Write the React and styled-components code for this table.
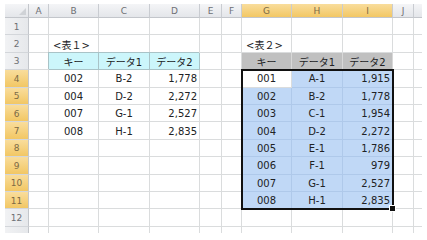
import React from 'react';
import styled, { createGlobalStyle, css } from 'styled-components';

const GlobalStyle = createGlobalStyle`
    html, body {
        margin: 0;
        padding: 0;
        background: #ffffff;
    }
`;

const COLUMNS = [
    { key: 'A', width: 20 },
    { key: 'B', width: 50 },
    { key: 'C', width: 51 },
    { key: 'D', width: 50 },
    { key: 'E', width: 22 },
    { key: 'F', width: 20 },
    { key: 'G', width: 50 },
    { key: 'H', width: 51 },
    { key: 'I', width: 50 },
    { key: 'J', width: 21 },
    { key: 'K', width: 8, partial: true }
];

const ROW_COUNT = 12;
const SELECTED_COLS = ['G', 'H', 'I'];
const SELECTED_ROWS = [4, 5, 6, 7, 8, 9, 10, 11];

const table1 = [
    ['002', 'B-2', '1,778'],
    ['004', 'D-2', '2,272'],
    ['007', 'G-1', '2,527'],
    ['008', 'H-1', '2,835']
];

const table2 = [
    ['001', 'A-1', '1,915'],
    ['002', 'B-2', '1,778'],
    ['003', 'C-1', '1,954'],
    ['004', 'D-2', '2,272'],
    ['005', 'E-1', '1,786'],
    ['006', 'F-1', '979'],
    ['007', 'G-1', '2,527'],
    ['008', 'H-1', '2,835']
];

// cell address -> { text, align, kind }
const buildCells = () => {
    const cells = {
        B2: { text: '<表１>', align: 'left' },
        G2: { text: '<表２>', align: 'left' }
    };
    ['キー', 'データ1', 'データ2'].forEach((label, i) => {
        cells['BCD'[i] + '3'] = { text: label, align: 'center', kind: 'cyan' };
        cells['GHI'[i] + '3'] = { text: label, align: 'center', kind: 'grey' };
    });
    table1.forEach((row, r) => {
        row.forEach((value, i) => {
            cells['BCD'[i] + (r + 4)] = { text: value, align: i === 2 ? 'right' : 'center' };
        });
    });
    table2.forEach((row, r) => {
        row.forEach((value, i) => {
            const addr = 'GHI'[i] + (r + 4);
            cells[addr] = {
                text: value,
                align: i === 2 ? 'right' : 'center',
                kind: addr === 'G4' ? 'active' : 'selected'
            };
        });
    });
    return cells;
};

const CELLS = buildCells();

const Sheet = styled.div`
    display: grid;
    grid-template-columns: 24px ${COLUMNS.map(c => c.width + 'px').join(' ')};
    grid-template-rows: 14px repeat(${ROW_COUNT}, 17.4px) 6px;
    margin: 4px 0 0 5px;
    width: max-content;
    font-family: "DejaVu Sans", "Noto Sans CJK JP", sans-serif;
`;

const Corner = styled.div`
    grid-row: 1;
    grid-column: 1;
    position: relative;
    box-sizing: border-box;
    background: linear-gradient(#f4f5f7, #e4e6ea);
    border-right: 1px solid #c3c6cb;
    border-bottom: 1px solid #c3c6cb;

    &::after {
        content: '';
        position: absolute;
        right: 2px;
        bottom: 2px;
        border-left: 7px solid transparent;
        border-bottom: 7px solid #cfd2d6;
    }
`;

const selectedHeader = css`
    background: linear-gradient(#f9dd9c, #f2c764);
    color: #7c6a45;
`;

const ColHeader = styled.div`
    grid-row: 1;
    grid-column: ${p => p.$col};
    box-sizing: border-box;
    display: flex;
    align-items: center;
    justify-content: center;
    background: linear-gradient(#f4f5f7, #e4e6ea);
    border-right: ${p => (p.$partial ? 'none' : '1px solid #c9ccd1')};
    border-bottom: 1px solid #c3c6cb;
    font-size: 9px;
    color: #6e7074;
    ${p => p.$selected && selectedHeader}
`;

const RowHeader = styled.div`
    grid-row: ${p => p.$row};
    grid-column: 1;
    box-sizing: border-box;
    display: flex;
    align-items: center;
    justify-content: center;
    padding-top: 1px;
    background: linear-gradient(90deg, #f1f2f4, #e6e8eb);
    border-right: 1px solid #c3c6cb;
    border-bottom: ${p => (p.$partial ? 'none' : '1px solid #d3d6da')};
    font-size: 9px;
    color: #6e7074;
    ${p => p.$selected && selectedHeader}
`;

const kindStyles = {
    cyan: css`
        background: #ccf6fb;
        border-color: #a9c3c7;
        box-shadow: -1px -1px 0 #a9c3c7;
    `,
    grey: css`
        background: #c0c0c0;
        border-right-color: #d8d8d8;
        border-bottom-color: #b0b0b0;
    `,
    selected: css`
        background: #c0d8f6;
        border-color: #afc9ea;
    `,
    active: css`
        background: #ffffff;
        border-color: #dadcdd;
    `
};

const Cell = styled.div`
    grid-row: ${p => p.$row};
    grid-column: ${p => p.$col};
    box-sizing: border-box;
    display: flex;
    align-items: center;
    justify-content: ${p =>
        p.$align === 'right' ? 'flex-end' : p.$align === 'center' ? 'center' : 'flex-start'};
    padding: 1px 2px 0 ${p => (p.$align === 'left' ? '4px' : '2px')};
    background: #ffffff;
    border-right: 1px solid #dadcdd;
    border-bottom: 1px solid #dadcdd;
    ${p => p.$partialCol && 'border-right: none;'}
    ${p => p.$partialRow && 'border-bottom: none;'}
    font-size: 10px;
    color: #202224;
    white-space: nowrap;
    ${p => p.$kind && kindStyles[p.$kind]}
`;

const Selection = styled.div`
    grid-row: 5 / 13;
    grid-column: 8 / 11;
    position: relative;
    margin: -1px -1px -1px -1px;
    border: 2px solid #111111;
    pointer-events: none;
`;

const FillHandle = styled.span`
    position: absolute;
    right: -4px;
    bottom: -4px;
    width: 5px;
    height: 5px;
    background: #111111;
    border: 1px solid #ffffff;
`;

const App = () => {
    const rows = Array.from({ length: ROW_COUNT + 1 }, (_, i) => i + 1);

    return (
        <>
            <GlobalStyle />
            <Sheet>
                <Corner />
                {COLUMNS.map((c, ci) => (
                    <ColHeader
                        key={c.key}
                        $col={ci + 2}
                        $partial={c.partial}
                        $selected={SELECTED_COLS.includes(c.key)}
                    >
                        {c.partial ? '' : c.key}
                    </ColHeader>
                ))}
                {rows.map(r => {
                    const partialRow = r > ROW_COUNT;
                    return (
                        <React.Fragment key={r}>
                            <RowHeader
                                $row={r + 1}
                                $partial={partialRow}
                                $selected={SELECTED_ROWS.includes(r)}
                            >
                                {partialRow ? '' : r}
                            </RowHeader>
                            {COLUMNS.map((c, ci) => {
                                const cell = CELLS[c.key + r] || {};
                                return (
                                    <Cell
                                        key={c.key}
                                        $row={r + 1}
                                        $col={ci + 2}
                                        $align={cell.align}
                                        $kind={cell.kind}
                                        $partialCol={c.partial}
                                        $partialRow={partialRow}
                                    >
                                        {cell.text}
                                    </Cell>
                                );
                            })}
                        </React.Fragment>
                    );
                })}
                <Selection>
                    <FillHandle />
                </Selection>
            </Sheet>
        </>
    );
};

export default App;
